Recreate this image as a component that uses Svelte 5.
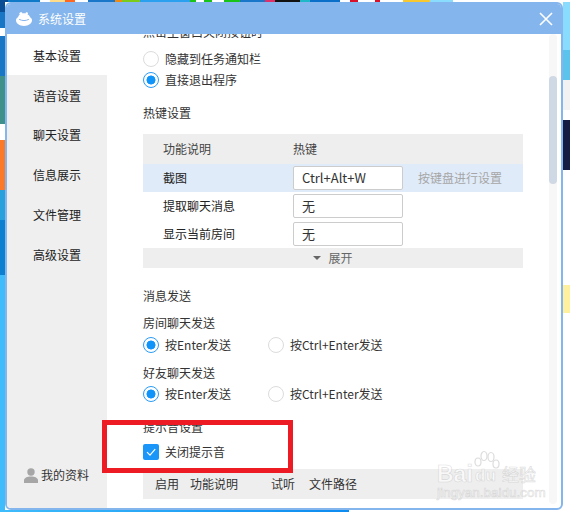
<script>
  const nav = ['基本设置', '语音设置', '聊天设置', '信息展示', '文件管理', '高级设置'];
  const hotkeys = [
    { label: '截图', key: 'Ctrl+Alt+W', active: true },
    { label: '提取聊天消息', key: '无' },
    { label: '显示当前房间', key: '无' }
  ];
  const sends = ['房间聊天发送', '好友聊天发送'];
</script>

<div class="desk">
  <div class="window">
    <header class="title">
      <svg class="logo" viewBox="0 0 16 16" width="16" height="16">
        <path fill="#fff" d="M5.2 1.2c.8 0 1.2.5 1.3 1.2.9-.3 2-.3 2.900 0 .1-.7.6-1.200 1.300-1.200.8 0 1.300.6 1.300 1.300 0 .4-.2.8-.5 1.100C13.200 4.300 13.800 5.200 14 6.300c1.200.5 2 1.700 2 3 0 3.300-3.600 5.700-8 5.700s-8-2.400-8-5.700c0-1.300.8-2.500 2-3 .2-1.100.8-2 1.800-2.700-.3-.3-.5-.7-.5-1.100 0-.7.7-1.300 1.900-1.300z"/>
        <path fill="none" stroke="#84b5ec" stroke-width="1" stroke-linecap="round" d="M3.500 8.500c2.800 1.500 6.200 1.500 9 0"/>
      </svg>
      <span class="title-text">系统设置</span>
      <svg class="close" viewBox="0 0 14 14" width="14" height="14">
        <path stroke="#fff" stroke-width="1.600" d="M1 1l12 12M13 1L1 13"/>
      </svg>
    </header>

    <div class="body">
      <aside class="side">
        {#each nav as item, i}
          <div class="nav" class:current={i === 0}>{item}</div>
        {/each}
        <div class="me">
          <svg viewBox="0 0 14 15" width="14" height="15">
            <circle cx="7" cy="4" r="3.700" fill="#a6a6a6"/>
            <path fill="#a6a6a6" d="M0 15v-2.500C0 10 3 8.500 7 8.500s7 1.500 7 4V15z"/>
          </svg>
          <span>我的资料</span>
        </div>
      </aside>

      <main class="main">
        <div class="scroll">
          <div class="line cut">点击主窗口关闭按钮时</div>
          <div class="radio-row r1"><span class="radio"></span>隐藏到任务通知栏</div>
          <div class="radio-row"><span class="radio on"></span>直接退出程序</div>

          <div class="line h-hot">热键设置</div>
          <div class="table">
            <div class="thead"><span class="c1">功能说明</span><span>热键</span></div>
            {#each hotkeys as row}
              <div class="trow" class:active={row.active}>
                <span class="c1 dark">{row.label}</span>
                <span class="input">{row.key}</span>
                {#if row.active}<span class="hint">按键盘进行设置</span>{/if}
              </div>
            {/each}
            <div class="more"><span class="caret"></span>展开</div>
          </div>

          <div class="line h-msg">消息发送</div>
          {#each sends as s, i}
            <div class="line" class:h-room={i === 0} class:h-friend={i === 1}>{s}</div>
            <div class="radio-row send" class:s1={i === 0}>
              <span class="opt"><span class="radio on"></span>按Enter发送</span>
              <span class="opt"><span class="radio"></span>按Ctrl+Enter发送</span>
            </div>
          {/each}

          <div class="line h-tone">提示音设置</div>
          <div class="check-row">
            <span class="check">
              <svg viewBox="0 0 16 16" width="16" height="16"><path fill="none" stroke="#fff" stroke-width="1.200" d="M4 8.200l3 3 5.200-6"/></svg>
            </span>关闭提示音
          </div>
          <div class="tone-head">
            <span class="t1">启用</span><span class="t2">功能说明</span><span class="t3">试听</span><span>文件路径</span>
          </div>
        </div>
        <div class="bar"><div class="thumb"></div></div>
      </main>
    </div>
  </div>

  <div class="redbox"></div>

  <div class="mark">
    <span class="bai">Bai</span>
    <svg class="paw" viewBox="0 0 30 30" width="30" height="30" fill="none" stroke="#cfcfcf" stroke-width="1.200" opacity=".7">
      <ellipse cx="8" cy="12" rx="3" ry="4"/>
      <ellipse cx="14" cy="6" rx="3" ry="4.500"/>
      <ellipse cx="21" cy="7" rx="3" ry="4.500"/>
      <ellipse cx="26" cy="14" rx="3" ry="4"/>
    </svg>
    <span class="du">du</span>
    <span class="jy">经验</span>
    <span class="url">jingyan.baidu.com</span>
  </div>
</div>

<style>
  :global(body) { margin: 0; }
  .desk {
    position: relative;
    width: 570px;
    height: 512px;
    overflow: hidden;
    background:
      linear-gradient(90deg, #0a4f96 0 8px, #0f7ac8 8px 40px, #fff 40px 50px, #ffdd88 50px 65px, #ff6622 65px 75px, #fff 75px 88px, #1976c8 88px 115px, #f08a10 115px 122px, #7ccb1a 122px 140px, #2aa0ee 140px 190px, #19c419 190px 196px, #fff 196px 204px, #19c419 204px 212px, #fff 212px 224px, #19c419 224px 240px, #1976c8 240px 265px, #e0306a 265px 275px, #111 275px 300px, #1fb8c8 300px 310px, #0a6fc8 310px 340px, #fff 340px 350px, #d8102c 350px 358px, #fff 358px 375px, #d8102c 375px 380px, #fff 380px 403px, #f8c830 403px 430px, #8adcff 430px 453px, #fff 453px 570px) 0 0 / 570px 2px no-repeat,
      linear-gradient(90deg, #3ebcfb 0, #0d8bf0 349px, #fff 349px) 0 510px / 570px 2px no-repeat,
      linear-gradient(180deg, #0a4f96 0 12px, #1876c5 12px 28px, #fff 28px 36px, #1876c5 36px 76px, #3f8f8a 76px 124px, #fff 124px 140px, #fb7a2a 140px 190px, #27a0dc 190px 220px, #0d7fd0 220px 275px, #3ebcfb 275px) 0 0 / 5px 512px no-repeat,
      linear-gradient(180deg, #8adcff 0 50px, #5cc3ec 50px 80px, #f2f2f2 80px 110px, #fff 110px 120px, #141c44 120px 170px, #fff 170px 285px, #fff0a0 285px 313px, #fff 313px) 563px 0 / 7px 512px no-repeat,
      #fff;
  }
  .window {
    position: absolute;
    left: 5px;
    top: 2px;
    width: 558px;
    height: 508px;
    box-sizing: border-box;
    border: 2px solid #84b5ec;
    border-radius: 6px;
    background: #fff;
    display: flex;
    flex-direction: column;
    overflow: hidden;
    font: 12px/20px "Noto Sans CJK SC", "Noto Sans", sans-serif;
    color: #333;
  }
  .title {
    flex: 0 0 30px;
    background: #84b5ec;
    display: flex;
    align-items: center;
    padding: 0 8px 0 9px;
    color: #fff;
  }
  .logo { margin-right: 6px; }
  .title-text { flex: 1; }
  .body { flex: 1; display: flex; min-height: 0; }
  .side {
    flex: 0 0 100px;
    background: #efefef;
    display: flex;
    flex-direction: column;
  }
  .nav {
    height: 40px;
    line-height: 40px;
    padding-left: 26px;
    color: #222;
  }
  .nav:first-child { height: 41px; line-height: 44px; }
  .nav:nth-child(2) { line-height: 42px; }
  .nav.current { background: #fff; }
  .me {
    margin-top: auto;
    margin-bottom: 23px;
    padding-left: 17px;
    display: flex;
    align-items: center;
    gap: 3px;
  }
  .main { flex: 1; display: flex; min-width: 0; padding-right: 4px; overflow: hidden; }
  .scroll { flex: 1; min-width: 0; padding-left: 36px; padding-right: 26px; overflow: hidden; }
  .bar { flex: 0 0 8px; height: 470px; background: #f7f7f7; border-radius: 4px; padding-top: 42px; box-sizing: border-box; }
  .thumb { height: 108px; background: #cfd8e5; border-radius: 4px; }
  .line { height: 20px; white-space: nowrap; }
  .cut { margin-top: -12px; }
  .radio-row { height: 21px; display: flex; align-items: center; white-space: nowrap; }
  .r1 { margin-top: 6px; }
  .radio {
    width: 16px;
    height: 16px;
    box-sizing: border-box;
    border: 1.500px solid #dcdcdc;
    border-radius: 50%;
    margin-right: 6px;
    flex: none;
    background: #fff;
  }
  .radio.on {
    border-color: #2a9cf6;
    background: radial-gradient(circle, #0f94fa 0 4.200px, #fff 4.800px);
  }
  .h-hot { margin-top: 13px; }
  .table { margin-top: 11px; }
  .thead {
    height: 30px;
    background: #eee;
    display: flex;
    align-items: center;
    color: #444;
  }
  .c1 { flex: 0 0 150px; padding-left: 20px; box-sizing: border-box; }
  .dark { color: #222; }
  .trow { height: 28px; display: flex; align-items: center; }
  .trow.active { background: #e0ebf9; }
  .input {
    flex: 0 0 110px;
    height: 24px;
    box-sizing: border-box;
    border: 1px solid #ccc;
    border-radius: 2px;
    background: #fff;
    padding-left: 8px;
    line-height: 22px;
    font-size: 13px;
    color: #333;
  }
  .hint { margin-left: 15px; color: #a6a6a6; }
  .more {
    height: 20px;
    background: #eee;
    display: flex;
    align-items: center;
    justify-content: center;
    color: #666;
  }
  .caret {
    width: 0;
    height: 0;
    border: 4px solid transparent;
    border-top: 4px solid #666;
    border-bottom: 0;
    margin-right: 7px;
  }
  .h-msg { margin-top: 18px; }
  .h-room { margin-top: 7px; }
  .s1 { margin-top: 1px; }
  .h-friend { margin-top: 8px; }
  .opt { flex: 0 0 125px; display: flex; align-items: center; }
  .h-tone { margin-top: 13px; }
  .check-row { margin-top: 5px; height: 20px; display: flex; align-items: center; }
  .check {
    width: 16px;
    height: 16px;
    background: #1a96f8;
    border-radius: 2px;
    margin-right: 6px;
    display: flex;
  }
  .tone-head {
    margin-top: 7px;
    height: 30px;
    background: #eee;
    display: flex;
    align-items: center;
    padding-left: 12px;
    color: #333;
  }
  .t1 { flex: 0 0 35px; }
  .t2 { flex: 0 0 81px; }
  .t3 { flex: 0 0 38px; }
  .redbox {
    position: absolute;
    left: 102px;
    top: 420px;
    width: 191px;
    height: 53px;
    box-sizing: border-box;
    border: 5px solid #ed1c24;
  }
  .mark {
    position: absolute;
    left: 437px;
    top: 450px;
    width: 105px;
    height: 50px;
    font-family: "Liberation Sans", sans-serif;
    color: rgba(255, 255, 255, .6);
    -webkit-text-stroke: .6px rgba(185, 185, 185, .5);
  }
  .mark span { position: absolute; white-space: nowrap; line-height: 1; }
  .paw { position: absolute; left: 33px; top: 0; }
  .bai { left: 0; top: 13px; font-size: 23px; font-weight: 700; }
  .du { left: 38px; top: 17px; font-size: 17px; font-weight: 700; }
  .jy { left: 65px; top: 15px; font-size: 17px; font-family: "Noto Sans CJK SC", sans-serif; }
  .url { left: 0; top: 36px; font-size: 13.500px; }
</style>
